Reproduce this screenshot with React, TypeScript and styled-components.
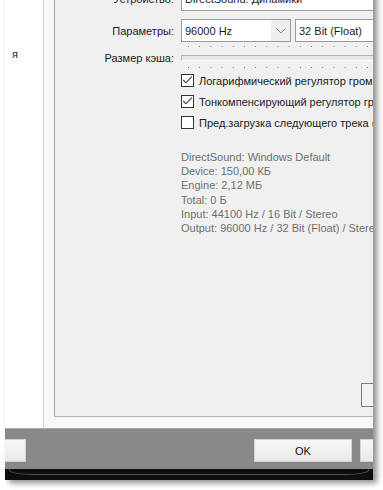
import styled, { createGlobalStyle } from 'styled-components';

const GlobalStyle = createGlobalStyle`
  *, *::before, *::after { box-sizing: border-box; }
  html, body { margin: 0; padding: 0; background: #fff; }
  body {
    width: 383px;
    height: 490px;
    overflow: hidden;
    font-family: 'Liberation Sans', Arial, sans-serif;
  }
`;

const Window = styled.div`
  display: flex;
  flex-direction: column;
  width: 368px;
  height: 500px;
  margin: -20px 0 0 5px;
  overflow: hidden;

  font: 11px 'Liberation Sans', Arial, sans-serif;
  color: #1b1b1b;

  box-shadow: 4px 3px 6px rgba(0, 0, 0, 0.45);
`;

const Body = styled.div`
  display: flex;
  height: 448px;
`;

const Sidebar = styled.div`
  flex: 0 0 39px;
  padding: 67px 0 0 7px;

  line-height: 14px;
  white-space: nowrap;

  background: #fff;
  border-right: 1px solid #d6d6d6;
`;

const Content = styled.div`
  display: flex;
  flex: 1;
  min-width: 0;
  padding: 0 0 11px 10px;

  background: #f8f8f8;
`;

const Panel = styled.div`
  display: flex;
  flex-direction: column;
  flex: 1;
  min-width: 0;
  padding-top: 7px;
  overflow: hidden;

  background: #f0f0f0;
  border-left: 1px solid #a9a9a9;
  border-bottom: 1px solid #b4b4b4;
`;

const Row = styled.div<{ $h: number; $mt?: number }>`
  display: grid;
  grid-template-columns: 119px 280px;
  column-gap: 7px;
  align-items: center;

  height: ${(p) => p.$h}px;
  margin-top: ${(p) => p.$mt ?? 0}px;
`;

const Label = styled.span`
  text-align: right;
  white-space: nowrap;
`;

const Field = styled.div`
  display: flex;
  align-items: center;
  height: 24px;
  padding-left: 3px;

  white-space: nowrap;

  background: #fff;
  border: 1px solid #9a9a9a;
`;

const Combos = styled.div`
  display: flex;
  gap: 4px;
`;

const Combo = styled.div<{ $w: number }>`
  display: flex;
  align-items: center;
  flex: 0 0 ${(p) => p.$w}px;
  height: 23px;
  padding-left: 3px;

  white-space: nowrap;

  background: #fff;
  border: 1px solid #9a9a9a;

  & span {
    flex: 1;
  }
`;

const Arrow = styled.div`
  display: flex;
  align-items: center;
  justify-content: center;
  width: 19px;
  height: 100%;

  background: #eeeeee;
`;

const Ticks = styled.div<{ $mt: number }>`
  height: 1px;
  margin: ${(p) => p.$mt}px 0 0 126px;

  background: linear-gradient(to right, #6f6f6f 1px, transparent 1px) 7px 0 / 11.2px 1px
    repeat-x;
`;

const Groove = styled.div`
  height: 6px;

  background: #e8e8e8;
  border: 1px solid #fff;
  border-top-color: #b3b3b3;
  border-left-color: #b3b3b3;
`;

const Checks = styled.div`
  display: flex;
  flex-direction: column;
  gap: 8px;
  margin: 6px 0 0 126px;
`;

const CheckRow = styled.label`
  display: flex;
  align-items: center;
  gap: 5px;
  height: 13px;

  white-space: nowrap;
`;

const Box = styled.span`
  display: flex;
  flex: 0 0 13px;
  height: 13px;

  background: #fff;
  border: 1px solid #333;
`;

const Info = styled.div`
  margin: 21px 0 0 126px;

  line-height: 14.2px;
  color: #6f6f6f;
  white-space: nowrap;
`;

const SideButton = styled.div`
  flex: 0 0 24px;
  width: 40px;
  margin: auto 0 9px 306px;

  background: #f2f2f2;
  border: 1px solid #7b7b7b;
`;

const BottomBar = styled.div`
  display: flex;
  align-items: flex-start;
  height: 41px;
  padding-top: 10px;

  background: #898989;
  border-top: 1px solid #a9a9a9;
`;

const Button = styled.div<{ $ml: number }>`
  display: flex;
  align-items: center;
  justify-content: center;
  flex: 0 0 98px;
  height: 23px;
  margin-left: ${(p) => p.$ml}px;

  font-size: 11px;
  color: #111;

  background: linear-gradient(#f7f7f7, #e9e9e9);
  border: 1px solid #d2d2d2;
`;

const Base = styled.div`
  height: 11px;
  padding: 0 4px;

  background: #0e0e0e;
`;

const Rim = styled.div`
  height: 6px;

  border: 1px solid #4c4c4c;
  border-top: none;
  border-radius: 0 0 22px 22px / 0 0 5px 5px;
`;

const Check = () => (
  <svg width='11' height='11' viewBox='0 0 11 11'>
    <path d='M1.3 5 L4 7.8 L9.8 1.6' fill='none' stroke='#3a3a3a' strokeWidth='1.1' />
  </svg>
);

const Chevron = () => (
  <svg width='10' height='6' viewBox='0 0 10 6'>
    <path d='M0.5 0.5 L5 5 L9.5 0.5' fill='none' stroke='#8a8a8a' strokeWidth='1' />
  </svg>
);

const options = [
  { text: 'Логарифмический регулятор громкости', checked: true },
  { text: 'Тонкомпенсирующий регулятор громкости', checked: true },
  { text: 'Пред.загрузка следующего трека (CUE)', checked: false },
];

const info = [
  'DirectSound: Windows Default',
  'Device: 150,00 КБ',
  'Engine: 2,12 МБ',
  'Total: 0 Б',
  'Input: 44100 Hz / 16 Bit / Stereo',
  'Output: 96000 Hz / 32 Bit (Float) / Stereo',
];

export default function App() {
  return (
    <>
      <GlobalStyle />
      <Window>
        <Body>
          <Sidebar>я</Sidebar>
          <Content>
            <Panel>
              <Row $h={24}>
                <Label>Устройство:</Label>
                <Field>DirectSound: Динамики</Field>
              </Row>
              <Row $h={23} $mt={8}>
                <Label>Параметры:</Label>
                <Combos>
                  <Combo $w={110}>
                    <span>96000 Hz</span>
                    <Arrow>
                      <Chevron />
                    </Arrow>
                  </Combo>
                  <Combo $w={120}>
                    <span>32 Bit (Float)</span>
                  </Combo>
                </Combos>
              </Row>
              <Ticks $mt={4} />
              <Row $h={11} $mt={5}>
                <Label>Размер кэша:</Label>
                <Groove />
              </Row>
              <Ticks $mt={4} />
              <Checks>
                {options.map((o) => (
                  <CheckRow key={o.text}>
                    <Box>{o.checked && <Check />}</Box>
                    {o.text}
                  </CheckRow>
                ))}
              </Checks>
              <Info>
                {info.map((line) => (
                  <div key={line}>{line}</div>
                ))}
              </Info>
              <SideButton />
            </Panel>
          </Content>
        </Body>
        <BottomBar>
          <Button $ml={-77} />
          <Button $ml={228}>OK</Button>
          <Button $ml={8}>Отмена</Button>
        </BottomBar>
        <Base>
          <Rim />
        </Base>
      </Window>
    </>
  );
}
